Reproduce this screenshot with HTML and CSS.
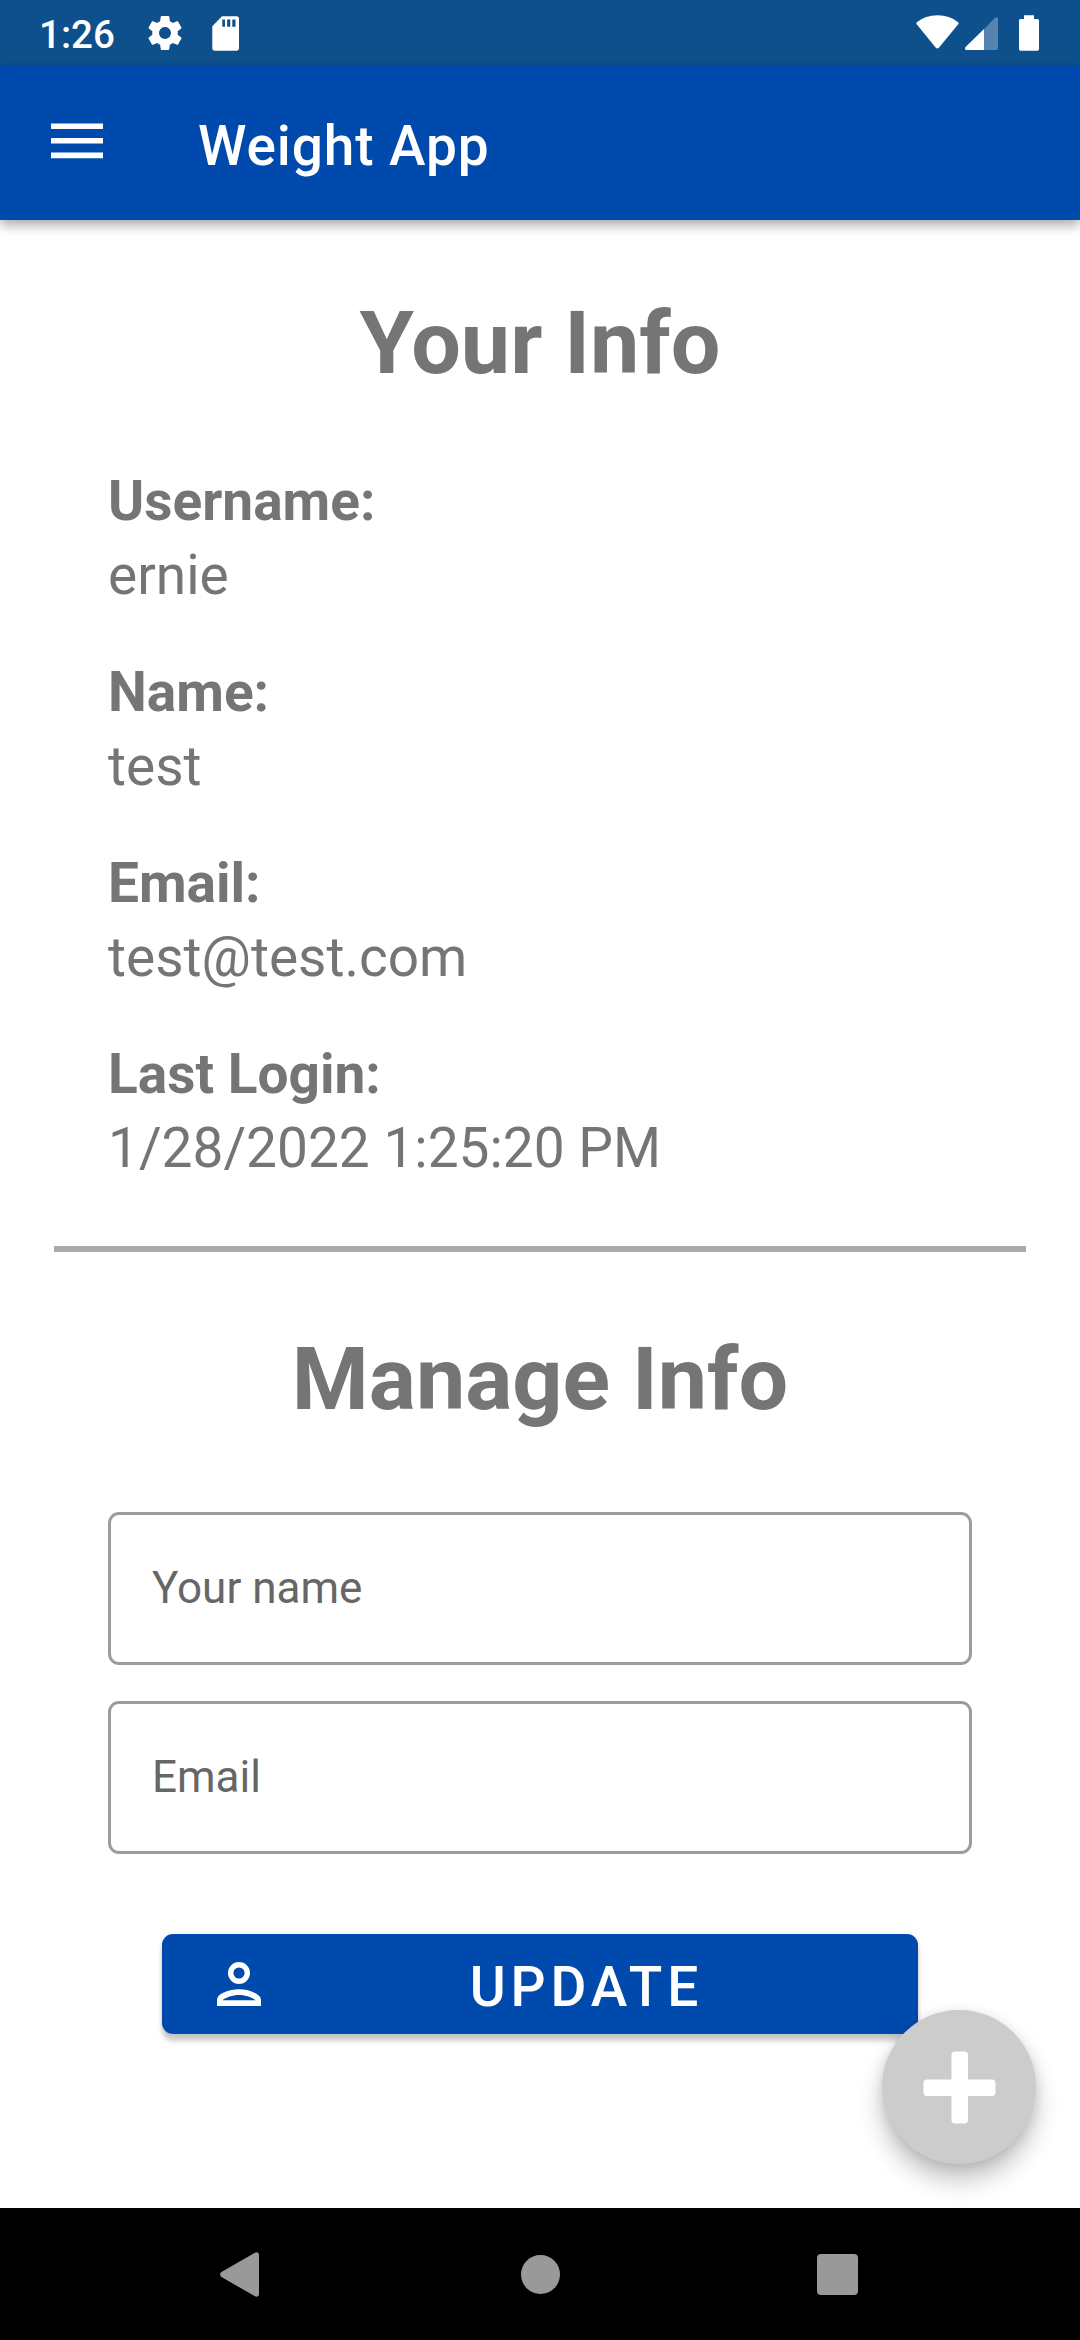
FILE: index.html
```html
<!DOCTYPE html>
<html lang="en">
<head>
<meta charset="utf-8">
<title>Weight App</title>
<link rel="stylesheet" href="styles.css">
</head>
<body>
<div class="screen">
  <div class="status-bar">
    <span class="clock">1:26</span>
    <svg class="status-gear" viewBox="2 2 20 20"><path fill="#fff" fill-rule="evenodd" d="M19.43 12.98c.04-.32.07-.64.07-.98s-.03-.66-.07-.98l2.11-1.65c.19-.15.24-.42.12-.64l-2-3.46c-.12-.22-.39-.3-.61-.22l-2.49 1c-.52-.4-1.08-.73-1.69-.98l-.38-2.65C14.46 2.18 14.25 2 14 2h-4c-.25 0-.46.18-.49.42l-.38 2.65c-.61.25-1.17.59-1.69.98l-2.49-1c-.23-.09-.49 0-.61.22l-2 3.46c-.13.22-.07.49.12.64l2.11 1.65c-.04.32-.07.65-.07.98s.03.66.07.98l-2.11 1.65c-.19.15-.24.42-.12.64l2 3.46c.12.22.39.3.61.22l2.49-1c.52.4 1.08.73 1.69.98l.38 2.65c.03.24.24.42.49.42h4c.25 0 .46-.18.49-.42l.38-2.65c.61-.25 1.17-.59 1.69-.98l2.49 1c.23.09.49 0 .61-.22l2-3.46c.12-.22.07-.49-.12-.64l-2.11-1.65zM12 15.5c-1.93 0-3.5-1.57-3.5-3.5s1.57-3.5 3.5-3.5 3.5 1.57 3.5 3.5-1.57 3.5-3.5 3.5z"/></svg>
    <svg class="status-sd" viewBox="0 0 27 35"><path fill="#fff" fill-rule="evenodd" d="M10 .3H24.500Q27 .3 27 3V32Q27 34.700 24.500 34.700H2.800Q.3 34.700 .3 32V10.200ZM10.300 3.400V10.800H13V3.400ZM15.100 3.400V10.800H18.300V3.400ZM20.300 3.400V10.800H23.500V3.400Z"/></svg>
    <svg class="status-wifi" viewBox="0 0 43 34"><path fill="#fff" d="M.8 7.200Q9.500 .3 21.500 .3T42.200 7.200Q43 8.200 42.200 9.300L22.900 32.700Q21.300 34.100 19.800 32.700L.7 9.300Q0 8.200 .8 7.200Z"/></svg>
    <svg class="status-signal" viewBox="0 0 33 33"><path fill="#fff" fill-opacity=".3" d="M19 12.300 29.800.9Q31-.3 32.200.4 33 .8 33 2V31.200Q33 33 31.200 33H19Z"/><path fill="#fff" d="M19 12V33H1.500Q0 33 0 31.500 0 30.500 .8 29.700Z"/></svg>
    <svg class="status-battery" viewBox="0 0 20 36"><path fill="#fff" d="M5 .2H15V4H18.500Q20 4 20 5.500V34Q20 35.800 18.500 35.800H1.500Q0 35.800 0 34V5.500Q0 4 1.500 4H5Z"/></svg>
  </div>
  <header class="app-bar">
    <svg class="menu-icon" viewBox="0 0 52 36"><path fill="#fff" d="M0 .5H52V6H0ZM0 15H52V20.500H0ZM0 29.500H52V35.300H0Z"/></svg>
    <h1 class="app-title">Weight App</h1>
  </header>
  <main class="content">
    <h2 class="heading">Your Info</h2>
    <dl class="info">
      <div class="field"><dt>Username:</dt><dd>ernie</dd></div>
      <div class="field"><dt>Name:</dt><dd>test</dd></div>
      <div class="field"><dt>Email:</dt><dd>test@test.com</dd></div>
      <div class="field"><dt>Last Login:</dt><dd>1/28/2022 1:25:20 PM</dd></div>
    </dl>
    <hr class="divider">
    <h2 class="heading">Manage Info</h2>
    <form class="form">
      <div class="input">Your name</div>
      <div class="input">Email</div>
      <button class="update" type="button">
        <svg class="person" viewBox="0 0 44 44"><circle cx="22" cy="11" r="8.300" fill="none" stroke="#fff" stroke-width="5.4"/><path fill="#fff" fill-rule="evenodd" d="M22 27.300C12.500 27.300 0 31.500 0 38V44H44V38C44 31.500 31.500 27.300 22 27.300ZM5.500 38.300C8.500 35.500 15.500 33 22 33S35.500 35.500 38.500 38.300Z"/></svg>
        <span class="update-label">UPDATE</span>
      </button>
    </form>
  </main>
  <nav class="nav-bar">
    <svg class="nav-back" viewBox="0 0 39 45"><path fill="#999" d="M1 20.300 34.500.9Q37-.5 38.500 1.300 39 2 39 3V42Q39 43 38.500 43.700 37 45.500 34.500 44.100L1 24.700Q-.8 22.500 1 20.300Z"/></svg>
    <span class="nav-home"></span>
    <span class="nav-recent"></span>
  </nav>
  <div class="fab">
    <svg class="plus" viewBox="0 0 73 73"><path fill="#fff" d="M28.500 4Q28.500 .5 32 .5H41.500Q45 .5 45 4V28.500H69Q72.500 28.500 72.500 32V41.500Q72.500 45 69 45H45V69Q45 72.500 41.500 72.500H32Q28.500 72.500 28.500 69V45H4Q.5 45 .5 41.500V32Q.5 28.500 4 28.500H28.500Z"/></svg>
  </div>
</div>
</body>
</html>
```

FILE: styles.css
```css
* { box-sizing: border-box; }
body, h1, h2, dl, dd { margin: 0; }
body { font-family: Roboto, "Liberation Sans", sans-serif; background: #fff; }
svg { display: block; flex: none; }

.screen {
  position: relative;
  display: flex;
  flex-direction: column;
  width: 1080px;
  height: 2340px;
  overflow: hidden;
}

.status-bar {
  display: flex;
  align-items: flex-start;
  height: 66px;
  padding: 15px 41px 0 39px;
  background: #0e508c;
}
.clock {
  width: 109px;
  margin-top: -3px;
  color: #fff;
  font-size: 38.5px;
  font-weight: 500;
  line-height: 46px;
}
.status-gear { width: 34px; height: 36px; }
.status-sd { width: 27px; height: 35px; margin: 1px auto 0 30px; }
.status-wifi { width: 43px; height: 34px; }
.status-signal { width: 33px; height: 33px; margin: 2px 21px 0 6px; }
.status-battery { width: 20px; height: 36px; }

.app-bar {
  position: relative;
  display: flex;
  align-items: flex-start;
  gap: 44px;
  height: 154px;
  padding: 57px 51px 0;
  background: #004aad;
  box-shadow: 0 5px 11px rgba(0, 0, 0, .34);
}
.menu-icon { width: 52px; height: 36px; }
.app-title {
  margin: -9px 0 0 51px;
  color: #fff;
  font-size: 55px;
  font-weight: 500;
  line-height: 64px;
  letter-spacing: .9px;
}

.content { flex: 1; padding-top: 71px; color: #757575; }
.heading {
  font-size: 88px;
  font-weight: 700;
  line-height: 104px;
  text-align: center;
}
.info {
  display: flex;
  flex-direction: column;
  gap: 43px;
  padding: 69px 108px 61px;
  font-size: 55px;
  line-height: 74px;
}
.info dt { font-weight: 700; }
.divider { height: 6px; margin: 0 54px 75px; border: 0; background: #a9a9a9; }

.form {
  display: flex;
  flex-direction: column;
  gap: 36px;
  padding: 81px 108px 0;
}
.input {
  display: flex;
  align-items: center;
  height: 153px;
  padding: 0 41px 2px;
  border: 3px solid #9c9c9c;
  border-radius: 11px;
  color: #666;
  font-size: 44px;
}
.update {
  display: flex;
  align-items: flex-start;
  height: 100px;
  margin: 44px 54px 0;
  padding: 28px 55px 0;
  border: 0;
  border-radius: 11px;
  background: #004aad;
  box-shadow: 0 7px 5px rgba(0, 0, 0, .2), 0 1px 4px rgba(0, 0, 0, .08);
  color: #fff;
  font: 500 55px/64px Roboto, "Liberation Sans", sans-serif;
  letter-spacing: 4.9px;
}
.person { width: 44px; height: 44px; }
.update-label { flex: 1; margin-top: -7px; text-align: center; padding-left: 49px; }

.nav-bar {
  display: flex;
  align-items: center;
  height: 132px;
  padding-left: 220px;
  background: #000;
}
.nav-back { width: 39px; height: 45px; }
.nav-home { width: 39px; height: 39px; margin: 0 257px 0 262px; border-radius: 50%; background: #999; }
.nav-recent { width: 41px; height: 41px; border-radius: 4px; background: #999; }

.fab {
  position: absolute;
  right: 44px;
  bottom: 176px;
  display: grid;
  place-items: center;
  width: 154px;
  height: 154px;
  border-radius: 50%;
  background: #ccc;
  box-shadow: 0 16px 24px rgba(0, 0, 0, .24), 0 2px 12px rgba(0, 0, 0, .1);
}
.plus { width: 73px; height: 73px; }
```
